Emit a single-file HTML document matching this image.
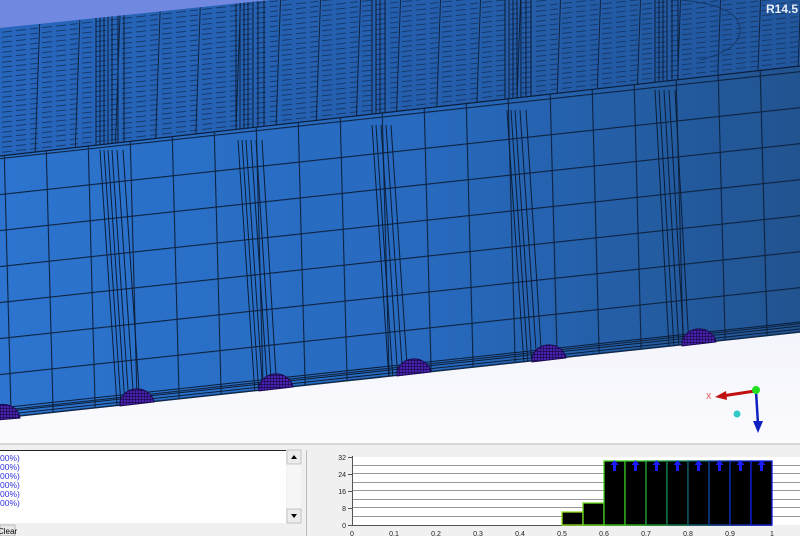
<!DOCTYPE html>
<html><head><meta charset="utf-8"><style>
html,body{margin:0;padding:0;width:800px;height:536px;overflow:hidden;background:#fff;font-family:"Liberation Sans",sans-serif}
</style></head><body>
<svg width="800" height="536" viewBox="0 0 800 536" xmlns="http://www.w3.org/2000/svg" style="position:absolute;left:0;top:0">
<defs>
<linearGradient id="bg" x1="0" y1="0" x2="0" y2="1">
<stop offset="0" stop-color="#dfe3f6"/><stop offset="1" stop-color="#fbfbfe"/></linearGradient>
<linearGradient id="front" x1="0" y1="0" x2="1" y2="0">
<stop offset="0" stop-color="#2c74cf"/><stop offset="0.55" stop-color="#2769bd"/><stop offset="1" stop-color="#21538f"/></linearGradient>
<linearGradient id="top" x1="0" y1="0" x2="1" y2="0">
<stop offset="0" stop-color="#2766bd"/><stop offset="1" stop-color="#22579e"/></linearGradient>
<pattern id="grid" width="42" height="36" patternUnits="userSpaceOnUse" patternTransform="translate(0,14) skewY(-6.2) skewX(1.5)">
<path d="M0 0.5H42M0.5 0V36" stroke="#0d2240" stroke-width="1.2" fill="none"/></pattern>
<pattern id="dash" width="40" height="5" patternUnits="userSpaceOnUse" patternTransform="skewY(-6.5)">
<path d="M2 2.5H12M16 2.5H26M30 2.5H38" stroke="#163a6c" stroke-width="1" fill="none"/></pattern>
<pattern id="tgrid" width="40" height="200" patternUnits="userSpaceOnUse" patternTransform="skewX(-2)">
<path d="M0.5 0V200" stroke="#0d2240" stroke-width="1" fill="none"/></pattern>
<pattern id="bump" width="3" height="3" patternUnits="userSpaceOnUse">
<rect width="3" height="3" fill="#4a22b0"/><path d="M0 .5H3M.5 0V3" stroke="#1a0a50" stroke-width=".7"/></pattern>
<clipPath id="cf"><polygon points="0,156 800,66 800,332 0,418"/></clipPath>
<clipPath id="ct"><polygon points="0,28 270,0 800,0 800,66 0,156"/></clipPath>
</defs>
<rect width="800" height="445" fill="url(#bg)"/>
<polygon points="0,0 280,0 0,29" fill="#7088e0"/>
<polygon points="0,28 270,0 800,0 800,66 0,156" fill="url(#top)"/>
<g clip-path="url(#ct)">
<rect width="800" height="160" fill="url(#dash)"/>
<rect width="800" height="160" fill="url(#tgrid)"/>
<g stroke="#0b1d38" stroke-width="1">
<path d="M96 0V150M100 0V150M104 0V150M108 0V150M112 0V150M118 0V150M124 0V150"/>
<path d="M236 0V140M240 0V140M244 0V140M248 0V140M253 0V140M258 0V140M264 0V140"/>
<path d="M505 0V110M509 0V110M513 0V110M517 0V110M521 0V110M526 0V110M531 0V110"/>
<path d="M655 0V90M659 0V90M663 0V90M667 0V90M672 0V90M678 0V90"/>
<path d="M372 0V125M376 0V125M380 0V125M385 0V125"/>
</g>
<path d="M680 0 Q740 5 740 30 Q740 50 700 60" stroke="#163a6c" fill="none"/>
</g>
<polygon points="0,156 800,66 800,332 0,418" fill="url(#front)"/>
<g clip-path="url(#cf)">
<rect width="800" height="440" fill="url(#grid)"/>
<g stroke="#0b1d38" stroke-width="1" fill="none">
<path d="M100 150L118 420M104 150L122 420M108 150L126 420M112 150L130 420M117 150L135 420M123 150L141 420"/>
<path d="M238 140L256 410M242 140L260 410M246 140L264 410M251 140L269 410M256 140L273 410M262 140L278 410"/>
<path d="M372 125L390 395M376 125L394 395M381 125L399 395M386 125L404 395M391 125L409 395"/>
<path d="M507 110L525 380M511 110L529 380M515 110L533 380M520 110L538 380M526 110L543 380"/>
<path d="M655 90L670 365M659 90L675 365M664 90L680 365M669 90L685 365M675 90L690 365"/>
<path d="M0 408L800 322M0 412L800 326M0 415L800 329"/>
</g>
</g>
<path d="M0 156L800 66" stroke="#0b1d38" stroke-width="1.2"/>
<path d="M0 418L800 332" stroke="#10284a" stroke-width="1.5"/>
<g fill="url(#bump)" stroke="#1a0a50" stroke-width="1">
<path d="M-14 421 A17 15 0 0 1 20 418Z"/>
<path d="M120 406 A17 15 0 0 1 154 402Z"/>
<path d="M259 391 A17 15 0 0 1 293 387Z"/>
<path d="M397 376 A17 15 0 0 1 431 372Z"/>
<path d="M532 362 A17 15 0 0 1 566 358Z"/>
<path d="M682 346 A17 15 0 0 1 716 342Z"/>
</g>
<text x="766" y="13" font-size="12" font-weight="bold" fill="#e8eef8">R14.5</text>
<path d="M755 391L722 396" stroke="#c01010" stroke-width="3"/>
<polygon points="715,397 726,391 727,400" fill="#c01010"/>
<text x="706" y="399" font-size="8" fill="#e04040">X</text>
<path d="M756 391L758 424" stroke="#1020c0" stroke-width="2.5"/>
<polygon points="758,433 753,421 763,421" fill="#1020c0"/>
<circle cx="756" cy="390" r="4" fill="#20e020"/>
<circle cx="737" cy="414" r="3.5" fill="#30c8c8"/>
<rect x="0" y="443" width="800" height="93" fill="#f0f0f0"/>
<rect x="0" y="443" width="800" height="2" fill="#d8d8d8"/>
<rect x="0" y="450" width="286" height="73" fill="#fff"/>
<path d="M0 450.5H286" stroke="#222"/>
<g font-size="8.5" fill="#3030e0">
<text x="0" y="461">00%)</text><text x="0" y="470">00%)</text><text x="0" y="479">00%)</text><text x="0" y="488">00%)</text><text x="0" y="497">00%)</text><text x="0" y="506">00%)</text>
</g>
<rect x="287" y="450" width="14" height="73" fill="#f6f6f6"/>
<rect x="287" y="450" width="14" height="14" fill="#ececec" stroke="#999" stroke-width=".5"/>
<polygon points="291,459 297,459 294,455" fill="#000"/>
<rect x="287" y="509" width="14" height="14" fill="#ececec" stroke="#999" stroke-width=".5"/>
<polygon points="291,514 297,514 294,518" fill="#000"/>
<rect x="0" y="525" width="15" height="11" fill="#e8e8e8" stroke="#888" stroke-width=".5"/>
<text x="-2" y="534" font-size="8" fill="#000">Clear</text>
<path d="M306.5 450V536" stroke="#bbb"/>
<rect x="352" y="457" width="448" height="68" fill="#fff"/>
<g stroke="#999" stroke-width="1">
<path d="M352 465.5H800M352 473.5H800M352 482.5H800M352 490.5H800M352 499.5H800M352 507.5H800M352 516.5H800"/>
</g>
<g stroke="#555" stroke-width="1"><path d="M352.5 456V526M352 525.5H772"/>
<path d="M348 457.5H352M348 474.5H352M348 491.5H352M348 508.5H352M348 525.5H352"/></g>
<g font-size="7" fill="#222" text-anchor="end">
<text x="346" y="460">32</text><text x="346" y="477">24</text><text x="346" y="494">16</text><text x="346" y="511">8</text><text x="346" y="528">0</text></g>
<g font-size="7" fill="#222" text-anchor="middle">
<text x="352" y="536">0</text><text x="394" y="536">0.1</text><text x="436" y="536">0.2</text><text x="478" y="536">0.3</text><text x="520" y="536">0.4</text><text x="562" y="536">0.5</text><text x="604" y="536">0.6</text><text x="646" y="536">0.7</text><text x="688" y="536">0.8</text><text x="730" y="536">0.9</text><text x="772" y="536">1</text></g>
<g fill="#000" stroke-width="1.3">
<rect x="562" y="512" width="21" height="13" stroke="#90e020"/>
<rect x="583" y="503" width="21" height="22" stroke="#70e020"/>
<rect x="604" y="461" width="21" height="64" stroke="#40d020"/>
<rect x="625" y="461" width="21" height="64" stroke="#30c020"/>
<rect x="646" y="461" width="21" height="64" stroke="#20a030"/>
<rect x="667" y="461" width="21" height="64" stroke="#108050"/>
<rect x="688" y="461" width="21" height="64" stroke="#106070"/>
<rect x="709" y="461" width="21" height="64" stroke="#1040a0"/>
<rect x="730" y="461" width="21" height="64" stroke="#1030c0"/>
<rect x="751" y="461" width="21" height="64" stroke="#1020e0"/>
</g>
<g fill="#1a1aff">
<path d="M614.5 460l-4 5h2.5v6h3v-6h2.5z"/><path d="M635.5 460l-4 5h2.5v6h3v-6h2.5z"/>
<path d="M656.5 460l-4 5h2.5v6h3v-6h2.5z"/><path d="M677.5 460l-4 5h2.5v6h3v-6h2.5z"/>
<path d="M698.5 460l-4 5h2.5v6h3v-6h2.5z"/><path d="M719.5 460l-4 5h2.5v6h3v-6h2.5z"/>
<path d="M740.5 460l-4 5h2.5v6h3v-6h2.5z"/><path d="M761.5 460l-4 5h2.5v6h3v-6h2.5z"/>
</g>
</svg>
</body></html>
